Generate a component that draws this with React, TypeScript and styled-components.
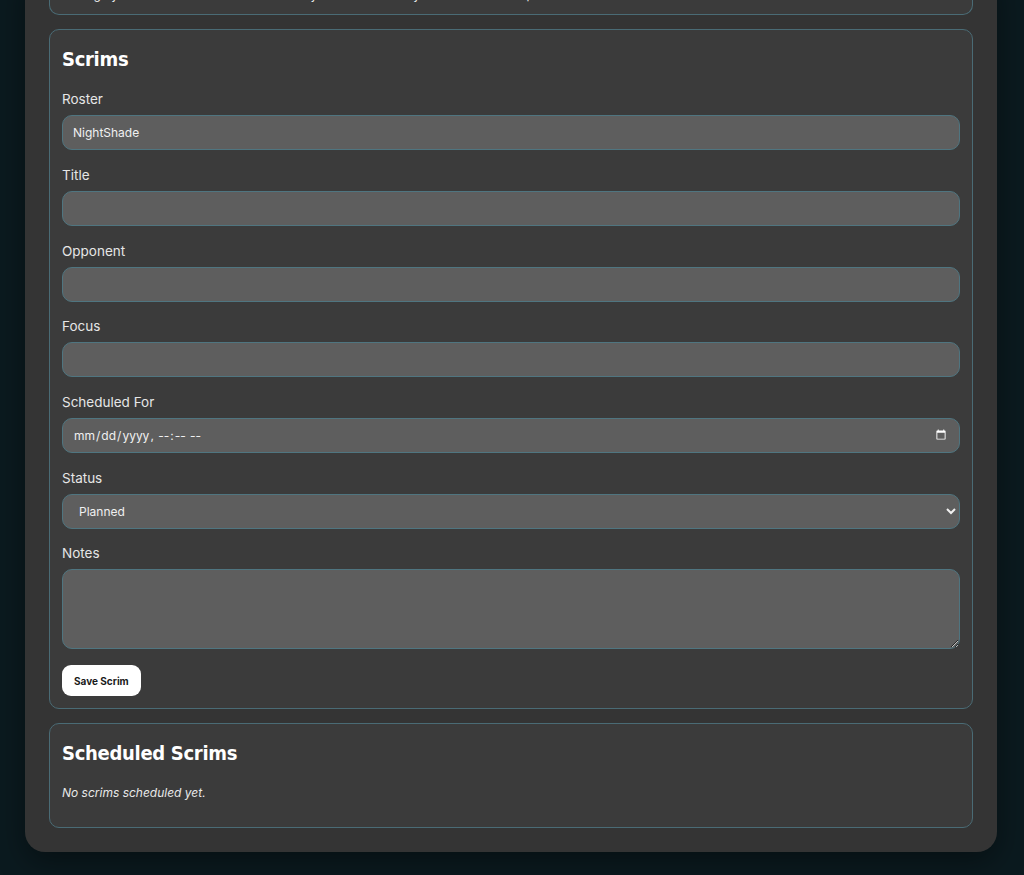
import styled, { createGlobalStyle } from "styled-components";

const Global = createGlobalStyle`
  html, body { margin: 0; padding: 0; background: #0b1a1f; }
  body { font-family: Inter, "Open Sans", sans-serif; color: #eaeaea; }
  * { box-sizing: border-box; }
`;

const Viewport = styled.div`
  height: 875px;
  overflow: hidden;
  display: flex;
  flex-direction: column;
  justify-content: flex-end;
  padding: 0 27px 23px 25px;
`;

const Shell = styled.div`
  background: #343434;
  border-radius: 0 0 20px 20px;
  padding: 0 24px 24px;
  display: flex;
  flex-direction: column;
  gap: 14px;
  box-shadow: 0 10px 30px rgba(0, 0, 0, 0.4);
`;

const Card = styled.section`
  background: #3b3b3b;
  border: 1.5px solid #4a6b75;
  border-radius: 10px;
  padding: ${(p: { $pad?: string }) => p.$pad || "16px 12px 12px"};
  display: flex;
  flex-direction: column;
`;

const TopCard = styled(Card)`
  border-top: none;
  border-radius: 0 0 10px 10px;
  padding: 0 12px 12px;
  font-size: 12px;
  line-height: 14px;
  height: 40px;
  overflow: hidden;
  justify-content: flex-end;
`;

const Title = styled.h2`
  font-family: "DejaVu Sans Condensed", "DejaVu Sans", sans-serif;
  font-weight: bold;
  font-size: 20px;
  color: #fff;
  margin: 1px 0 20px;
  letter-spacing: -0.3px;
`;

const Label = styled.label`
  font-size: 13.5px;
  color: #e6e6e6;
  margin-bottom: 8px;
`;

const Field = styled.div`
  display: flex;
  flex-direction: column;
  margin-bottom: 16.7px;
`;

const inputCss = `
  width: 100%;
  background: #5e5e5e;
  border: 1.5px solid #4f7580;
  border-radius: 10px;
  color: #f0f0f0;
  font-family: Inter, sans-serif;
  font-size: 12px;
  padding: 0 10px;
  outline: none;
  color-scheme: dark;
`;

const Input = styled.input`
  ${inputCss}
  height: 35px;
`;

const Select = styled.select`
  ${inputCss}
  height: 35px;
  padding-left: 12px;
`;

const TextArea = styled.textarea`
  ${inputCss}
  height: 80px;
  resize: vertical;
`;

const Button = styled.button`
  align-self: flex-start;
  background: #fff;
  color: #1a1a1a;
  border: none;
  border-radius: 9px;
  font-family: Inter, sans-serif;
  font-weight: 700;
  font-size: 10px;
  height: 31px;
  padding: 0 12px;
  margin-top: -1px;
`;

const Empty = styled.p`
  font-style: italic;
  font-size: 12px;
  margin: 0 0 15px;
  color: #e8e8e8;
`;

export default function App() {
  return (
    <>
      <Global />
      <Viewport>
        <Shell>
          <TopCard>
            Manage your rosters here. The standard Player dashboard only shows memberships and invitations.
          </TopCard>
          <Card>
            <Title>Scrims</Title>
            <Field>
              <Label>Roster</Label>
              <Input defaultValue="NightShade" />
            </Field>
            <Field>
              <Label>Title</Label>
              <Input />
            </Field>
            <Field>
              <Label>Opponent</Label>
              <Input />
            </Field>
            <Field>
              <Label>Focus</Label>
              <Input />
            </Field>
            <Field>
              <Label>Scheduled For</Label>
              <Input type="datetime-local" />
            </Field>
            <Field>
              <Label>Status</Label>
              <Select defaultValue="Planned">
                <option>Planned</option>
                <option>Completed</option>
              </Select>
            </Field>
            <Field>
              <Label>Notes</Label>
              <TextArea />
            </Field>
            <Button>Save Scrim</Button>
          </Card>
          <Card>
            <Title>Scheduled Scrims</Title>
            <Empty>No scrims scheduled yet.</Empty>
          </Card>
        </Shell>
      </Viewport>
    </>
  );
}
